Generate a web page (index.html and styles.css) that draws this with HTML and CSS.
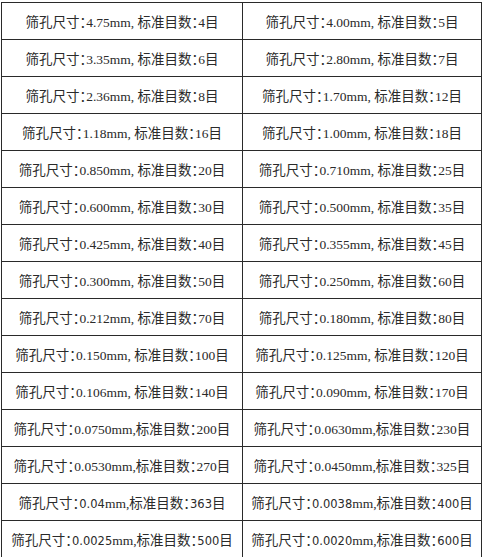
FILE: index.html
```html
<!DOCTYPE html>
<html lang="zh">
<head>
<meta charset="utf-8">
<link rel="stylesheet" href="styles.css">
</head>
<body>
<table class="sieve">
<tr><td>筛孔尺寸：4.75mm, 标准目数：4目</td><td>筛孔尺寸：4.00mm, 标准目数：5目</td></tr>
<tr><td>筛孔尺寸：3.35mm, 标准目数：6目</td><td>筛孔尺寸：2.80mm, 标准目数：7目</td></tr>
<tr><td>筛孔尺寸：2.36mm, 标准目数：8目</td><td>筛孔尺寸：1.70mm, 标准目数：12目</td></tr>
<tr><td>筛孔尺寸：1.18mm, 标准目数：16目</td><td>筛孔尺寸：1.00mm, 标准目数：18目</td></tr>
<tr><td>筛孔尺寸：0.850mm, 标准目数：20目</td><td>筛孔尺寸：0.710mm, 标准目数：25目</td></tr>
<tr><td>筛孔尺寸：0.600mm, 标准目数：30目</td><td>筛孔尺寸：0.500mm, 标准目数：35目</td></tr>
<tr><td>筛孔尺寸：0.425mm, 标准目数：40目</td><td>筛孔尺寸：0.355mm, 标准目数：45目</td></tr>
<tr><td>筛孔尺寸：0.300mm, 标准目数：50目</td><td>筛孔尺寸：0.250mm, 标准目数：60目</td></tr>
<tr><td>筛孔尺寸：0.212mm, 标准目数：70目</td><td>筛孔尺寸：0.180mm, 标准目数：80目</td></tr>
<tr><td>筛孔尺寸：0.150mm, 标准目数：100目</td><td>筛孔尺寸：0.125mm, 标准目数：120目</td></tr>
<tr><td>筛孔尺寸：0.106mm, 标准目数：140目</td><td>筛孔尺寸：0.090mm, 标准目数：170目</td></tr>
<tr><td>筛孔尺寸：0.0750mm,标准目数：200目</td><td>筛孔尺寸：0.0630mm,标准目数：230目</td></tr>
<tr><td>筛孔尺寸：0.0530mm,标准目数：270目</td><td>筛孔尺寸：0.0450mm,标准目数：325目</td></tr>
<tr><td>筛孔尺寸：<span class="s">0.04</span>mm,标准目数：<span class="s">363</span>目</td><td>筛孔尺寸：<span class="s">0.0038</span>mm,标准目数：<span class="s">400</span>目</td></tr>
<tr><td>筛孔尺寸：<span class="s">0.0025</span>mm,标准目数：<span class="s">500</span>目</td><td>筛孔尺寸：<span class="s">0.0020</span>mm,标准目数：<span class="s">600</span>目</td></tr>
</table>
</body>
</html>
```

FILE: styles.css
```css
html, body {
  margin: 0;
  padding: 0;
  background: #ffffff;
}
body {
  padding: 2px 0 0 1px;
}
.sieve {
  border-collapse: collapse;
  width: 481px;
  height: 551px;
  table-layout: fixed;
  font-family: "Liberation Serif", "Noto Sans CJK SC", serif;
  font-size: 13.5px;
  color: #2a2a2a;
  font-feature-settings: "halt";
}
.sieve td {
  border: 1px solid #2a2a2a;
  text-align: center;
  vertical-align: middle;
  padding: 0;
  height: 36px;
  white-space: nowrap;
}
.sieve td:first-child {
  width: 240px;
}
.s {
  font-family: "DejaVu Sans", "Liberation Sans", sans-serif;
  font-size: 11.5px;
}
```
